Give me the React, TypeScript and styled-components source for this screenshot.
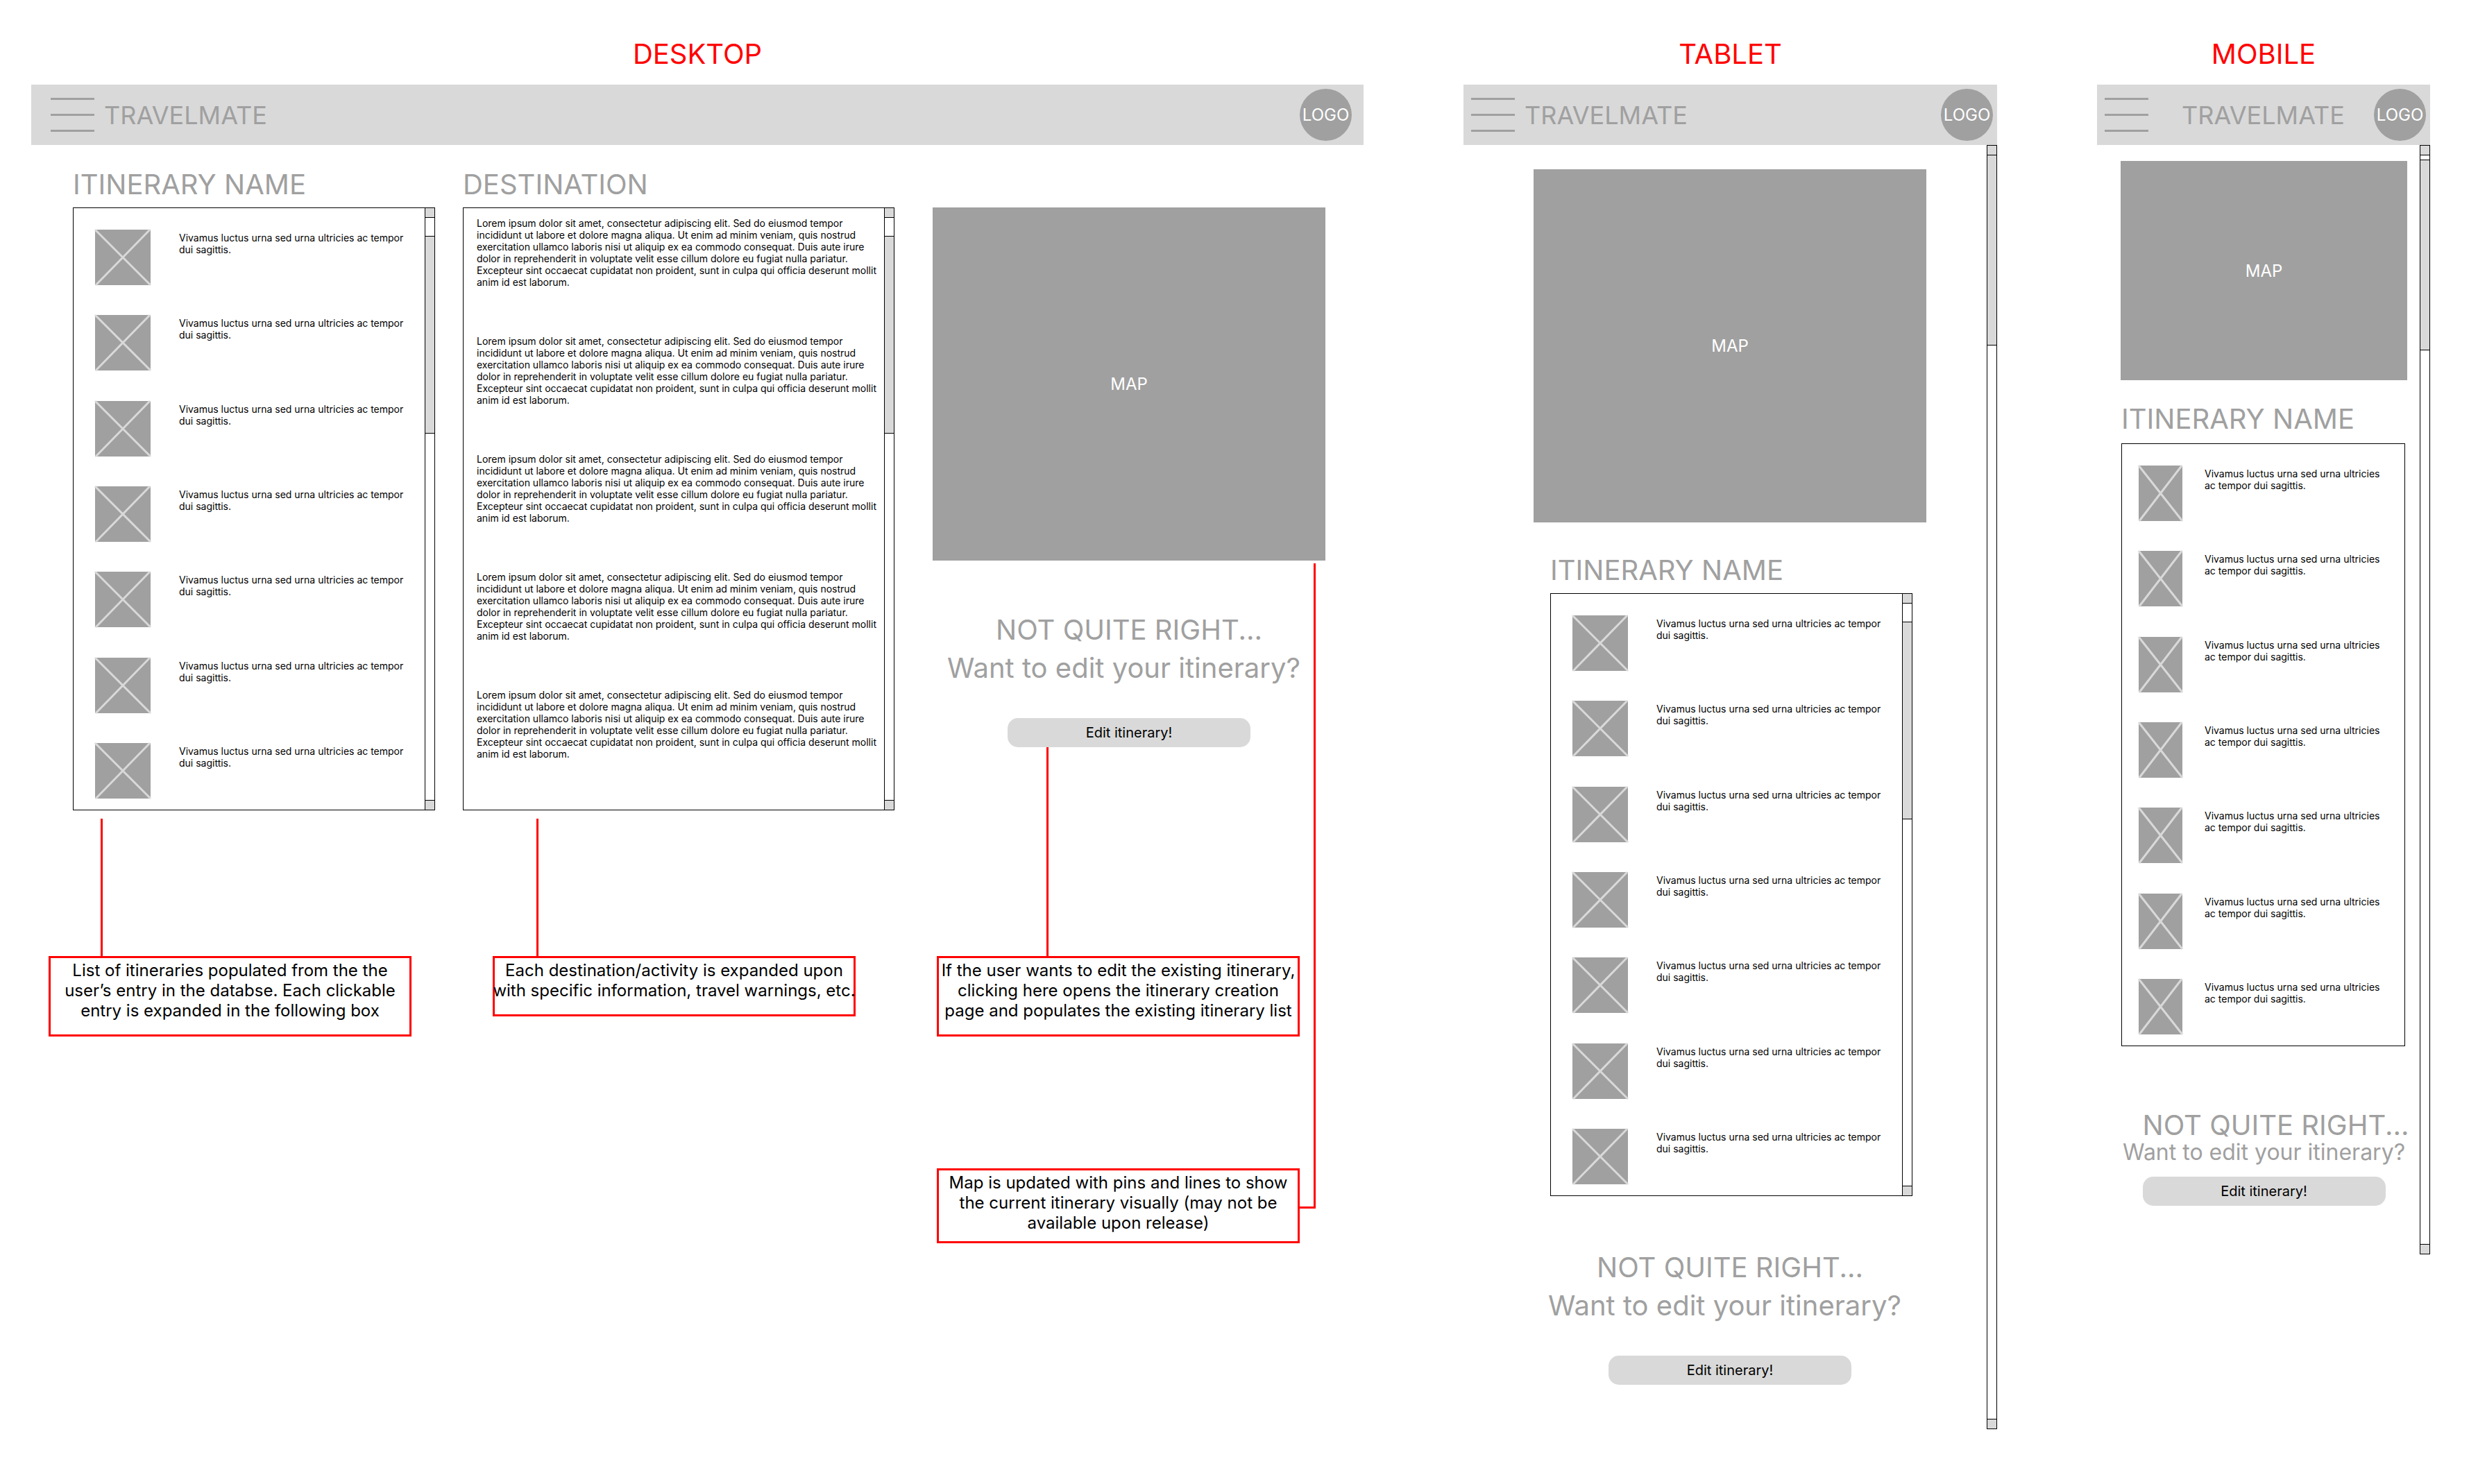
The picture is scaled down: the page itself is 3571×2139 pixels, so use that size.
import React from 'react';
import styled, { createGlobalStyle, css } from 'styled-components';

const color = {
  page: '#ffffff',
  light: '#d9d9d9',
  mid: '#a0a0a0',
  ink: '#000000',
  note: '#ff0000',
};

type Device = 'desktop' | 'tablet' | 'mobile';

const GlobalStyle = createGlobalStyle`
  *, *::before, *::after { box-sizing: border-box; }
  body {
    margin: 0;
    background: ${color.page};
    color: ${color.ink};
    font-family: Inter, "Liberation Sans", sans-serif;
    font-size: 14px;
    font-optical-sizing: none;
    line-height: 17px;
  }
  h1, h2, h3, p, ul { margin: 0; padding: 0; font-weight: 400; }
  ul { list-style: none; }
  button { border: 0; padding: 0; color: inherit; font: inherit; font-optical-sizing: none; cursor: pointer; }
`;

const Board = styled.main`
  display: grid;
  grid-template-columns: 1920fr 769fr 480fr;
  column-gap: 144px;
  align-items: start;
  padding: 54px 69px 64px 45px;
`;

const Frame = styled.section`
  display: flex;
  flex-direction: column;
  min-width: 0;
`;

const FrameLabel = styled.h1`
  margin-bottom: 20px;
  color: ${color.note};
  font-size: 40px;
  line-height: 48px;
  text-align: center;
`;

/* ---------- header ---------- */

const Header = styled.header<{ $device: Device }>`
  display: flex;
  align-items: center;
  height: 87px;
  padding: ${({ $device }) => ($device === 'desktop' ? '0 17px 0 28px' : '0 6px 0 11px')};
  background: ${color.light};
`;

const MenuButton = styled.button`
  display: flex;
  flex-direction: column;
  justify-content: space-between;
  width: 63px;
  height: 49px;
  background: none;
`;

const MenuLine = styled.span`
  height: 3px;
  background: ${color.mid};
`;

const Brand = styled.span<{ $device: Device }>`
  margin-left: ${({ $device }) => ($device === 'mobile' ? 48 : 14)}px;
  color: ${color.mid};
  font-size: 36px;
  line-height: 44px;
`;

const Logo = styled.div`
  display: grid;
  place-items: center;
  width: 75px;
  height: 75px;
  margin-left: auto;
  border-radius: 50%;
  background: ${color.mid};
  color: ${color.page};
  font-size: 24px;
  line-height: 29px;
`;

function TopBar({ device }: { device: Device }) {
  return (
    <Header $device={device}>
      <MenuButton type="button" aria-label="Menu">
        <MenuLine />
        <MenuLine />
        <MenuLine />
      </MenuButton>
      <Brand $device={device}>TRAVELMATE</Brand>
      <Logo>LOGO</Logo>
    </Header>
  );
}

/* ---------- scroll bars ---------- */

const Track = styled.div<{ $standalone?: boolean }>`
  display: flex;
  flex-direction: column;
  flex: none;
  background: ${color.page};
  ${({ $standalone }) =>
    $standalone
      ? css`
          width: 15px;
          border: 1px solid ${color.ink};
        `
      : css`
          width: 14px;
          border-left: 1px solid ${color.ink};
        `}
`;

const TrackEnd = styled.div<{ $end?: boolean }>`
  height: 14px;
  margin-top: ${({ $end }) => ($end ? 'auto' : '0')};
  border: 0 solid ${color.ink};
  border-width: ${({ $end }) => ($end ? '1px 0 0' : '0 0 1px')};
  background: ${color.light};
`;

const Thumb = styled.div<{ $gap: number; $length: number }>`
  height: ${({ $length }) => $length}px;
  margin-top: ${({ $gap }) => $gap}px;
  border: solid ${color.ink};
  border-width: ${({ $gap }) => ($gap ? '1px 0' : '0 0 1px')};
  background: ${color.light};
`;

function Scrollbar({ gap, length, standalone }: { gap: number; length: number; standalone?: boolean }) {
  return (
    <Track $standalone={standalone} aria-hidden="true">
      <TrackEnd />
      <Thumb $gap={gap} $length={length} />
      <TrackEnd $end />
    </Track>
  );
}

/* ---------- shared blocks ---------- */

const SectionTitle = styled.h2<{ $narrow?: boolean }>`
  margin-bottom: ${({ $narrow }) => ($narrow ? 11 : 9)}px;
  color: ${color.mid};
  font-size: 40px;
  line-height: 48px;
`;

const MapBox = styled.div<{ $short?: boolean }>`
  display: grid;
  place-items: center;
  height: ${({ $short }) => ($short ? 316 : 509)}px;
  background: ${color.mid};
  color: ${color.page};
  font-size: 24px;
  line-height: 29px;
`;

const Panel = styled.div`
  display: flex;
  height: 869px;
  border: 1px solid ${color.ink};
`;

const ItemList = styled.ul<{ $narrow?: boolean }>`
  display: flex;
  flex: 1;
  flex-direction: column;
  justify-content: space-between;
  min-width: 0;
  padding: ${({ $narrow }) => ($narrow ? '31px 24px 16px' : '31px 24px 16px 31px')};
`;

const Item = styled.li<{ $narrow?: boolean }>`
  display: grid;
  grid-template-columns: ${({ $narrow }) => ($narrow ? 63 : 80)}px 1fr;
  column-gap: ${({ $narrow }) => ($narrow ? 32 : 41)}px;
`;

const ItemText = styled.p`
  padding-top: 3px;
`;

const Picture = styled.svg`
  display: block;
  width: 100%;
  height: 80px;
  overflow: visible;
`;

function Placeholder() {
  return (
    <Picture viewBox="0 0 80 80" preserveAspectRatio="none" aria-hidden="true">
      <rect width="80" height="80" fill={color.mid} />
      <path
        d="M0 0L80 80M79 0L1 80"
        stroke={color.light}
        strokeWidth="3"
        vectorEffect="non-scaling-stroke"
      />
    </Picture>
  );
}

function Itinerary({ narrow }: { narrow?: boolean }) {
  return (
    <>
      <SectionTitle $narrow={narrow}>ITINERARY NAME</SectionTitle>
      <Panel>
        <ItemList $narrow={narrow}>
          {Array.from({ length: 7 }, (_, i) => (
            <Item key={i} $narrow={narrow}>
              <Placeholder />
              <ItemText>Vivamus luctus urna sed urna ultricies ac tempor dui sagittis.</ItemText>
            </Item>
          ))}
        </ItemList>
        {!narrow && <Scrollbar gap={26} length={285} />}
      </Panel>
    </>
  );
}

const Prompt = styled.div<{ $space: number }>`
  display: flex;
  flex-direction: column;
  align-items: center;
  margin-top: ${({ $space }) => $space}px;
  color: ${color.mid};
`;

const PromptTitle = styled.h3<{ $narrow?: boolean }>`
  padding-left: ${({ $narrow }) => ($narrow ? 34 : 0)}px;
  margin-bottom: ${({ $narrow }) => ($narrow ? 0 : 7)}px;
  font-size: 40px;
  line-height: ${({ $narrow }) => ($narrow ? 44 : 48)}px;
  white-space: nowrap;
`;

const PromptText = styled.p<{ $narrow?: boolean }>`
  padding-right: ${({ $narrow }) => ($narrow ? 0 : 15)}px;
  margin-bottom: ${({ $narrow }) => ($narrow ? 18 : 48)}px;
  font-size: ${({ $narrow }) => ($narrow ? 32 : 40)}px;
  line-height: ${({ $narrow }) => ($narrow ? 34 : 48)}px;
  white-space: nowrap;
`;

const EditButton = styled.button`
  width: 350px;
  height: 42px;
  border-radius: 15px;
  background: ${color.light};
  color: ${color.ink};
  font-size: 20px;
  line-height: 24px;
`;

function EditPrompt({ space, narrow }: { space: number; narrow?: boolean }) {
  return (
    <Prompt $space={space}>
      <PromptTitle $narrow={narrow}>NOT QUITE RIGHT...</PromptTitle>
      <PromptText $narrow={narrow}>Want to edit your itinerary?</PromptText>
      <EditButton type="button">Edit itinerary!</EditButton>
    </Prompt>
  );
}

/* ---------- desktop ---------- */

const DesktopBody = styled.div`
  display: grid;
  grid-template-columns: 522fr 622fr 581fr;
  column-gap: 40px;
  padding: 33px 55px 0 60px;
`;

const Column = styled.div`
  min-width: 0;
`;

const MapColumn = styled.div`
  min-width: 0;
  padding: 57px 0 0 15px;
`;

const Articles = styled.div`
  display: flex;
  flex: 1;
  flex-direction: column;
  gap: 68px;
  padding: 13px 0 0 19px;
`;

const Article = styled.p`
  max-width: 584px;
`;

const Notes = styled.div`
  display: grid;
  grid-template-columns: repeat(3, 523fr);
  column-gap: 117px;
  row-gap: 190px;
  align-items: start;
  padding: 210px 92px 0 25px;
`;

const Note = styled.aside<{ $last?: boolean }>`
  position: relative;
  grid-column: ${({ $last }) => ($last ? 3 : 'auto')};
  padding: 3px 0 ${({ $last }) => ($last ? 12 : 20)}px;
  border: 3px solid ${color.note};
  font-size: 24px;
  line-height: 29px;
  text-align: center;
`;

const NoteText = styled.p`
  margin: 0 -3px;
  white-space: nowrap;
`;

/* Line that rises from the top edge of a note to the part it explains. */
const Stem = styled.span<{ $left: number; $height: number }>`
  position: absolute;
  bottom: 100%;
  left: ${({ $left }) => $left}px;
  width: 3px;
  height: ${({ $height }) => $height}px;
  background: ${color.note};
`;

/* Line that leaves the right edge of a note and turns up to the map. */
const Elbow = styled.span`
  position: absolute;
  bottom: 47px;
  left: 100%;
  width: 26px;
  height: 930px;
  border: solid ${color.note};
  border-width: 0 3px 3px 0;
`;

const lorem =
  'Lorem ipsum dolor sit amet, consectetur adipiscing elit. Sed do eiusmod tempor incididunt ut labore et dolore magna aliqua. Ut enim ad minim veniam, quis nostrud exercitation ullamco laboris nisi ut aliquip ex ea commodo consequat. Duis aute irure dolor in reprehenderit in voluptate velit esse cillum dolore eu fugiat nulla pariatur. Excepteur sint occaecat cupidatat non proident, sunt in culpa qui officia deserunt mollit anim id est laborum.';

function Desktop() {
  return (
    <Frame>
      <FrameLabel>DESKTOP</FrameLabel>
      <TopBar device="desktop" />
      <DesktopBody>
        <Column>
          <Itinerary />
        </Column>
        <Column>
          <SectionTitle>DESTINATION</SectionTitle>
          <Panel>
            <Articles>
              {Array.from({ length: 5 }, (_, i) => (
                <Article key={i}>{lorem}</Article>
              ))}
            </Articles>
            <Scrollbar gap={26} length={285} />
          </Panel>
        </Column>
        <MapColumn>
          <MapBox>MAP</MapBox>
          <EditPrompt space={76} />
        </MapColumn>
      </DesktopBody>
      <Notes>
        <Note>
          <Stem $left={72} $height={201} />
          <NoteText>
            List of itineraries populated from the the
            <br />
            user’s entry in the databse. Each clickable
            <br />
            entry is expanded in the following box
          </NoteText>
        </Note>
        <Note>
          <Stem $left={60} $height={201} />
          <NoteText>
            Each destination/activity is expanded upon
            <br />
            with specific information, travel warnings, etc.
          </NoteText>
        </Note>
        <Note>
          <Stem $left={155} $height={304} />
          <NoteText>
            If the user wants to edit the existing itinerary,
            <br />
            clicking here opens the itinerary creation
            <br />
            page and populates the existing itinerary list
          </NoteText>
        </Note>
        <Note $last>
          <Elbow />
          <NoteText>
            Map is updated with pins and lines to show
            <br />
            the current itinerary visually (may not be
            <br />
            available upon release)
          </NoteText>
        </Note>
      </Notes>
    </Frame>
  );
}

/* ---------- tablet and mobile ---------- */

const ScrollFrame = styled.div`
  display: flex;
`;

const TabletBody = styled.div`
  flex: 1;
  min-width: 0;
  padding: 35px 87px 64px 101px;
`;

const TabletList = styled.div`
  margin: 45px 20px 0 24px;
`;

const MobileBody = styled.div`
  flex: 1;
  min-width: 0;
  padding: 23px 18px 70px 34px;
`;

const MobileList = styled.div`
  margin: 32px 3px 0 1px;
`;

function Tablet() {
  return (
    <Frame>
      <FrameLabel>TABLET</FrameLabel>
      <TopBar device="tablet" />
      <ScrollFrame>
        <TabletBody>
          <MapBox>MAP</MapBox>
          <TabletList>
            <Itinerary />
          </TabletList>
          <EditPrompt space={79} />
        </TabletBody>
        <Scrollbar standalone gap={0} length={274} />
      </ScrollFrame>
    </Frame>
  );
}

function Mobile() {
  return (
    <Frame>
      <FrameLabel>MOBILE</FrameLabel>
      <TopBar device="mobile" />
      <ScrollFrame>
        <MobileBody>
          <MapBox $short>MAP</MapBox>
          <MobileList>
            <Itinerary narrow />
          </MobileList>
          <EditPrompt narrow space={92} />
        </MobileBody>
        <Scrollbar standalone gap={6} length={275} />
      </ScrollFrame>
    </Frame>
  );
}

export default function App() {
  return (
    <>
      <GlobalStyle />
      <Board>
        <Desktop />
        <Tablet />
        <Mobile />
      </Board>
    </>
  );
}
